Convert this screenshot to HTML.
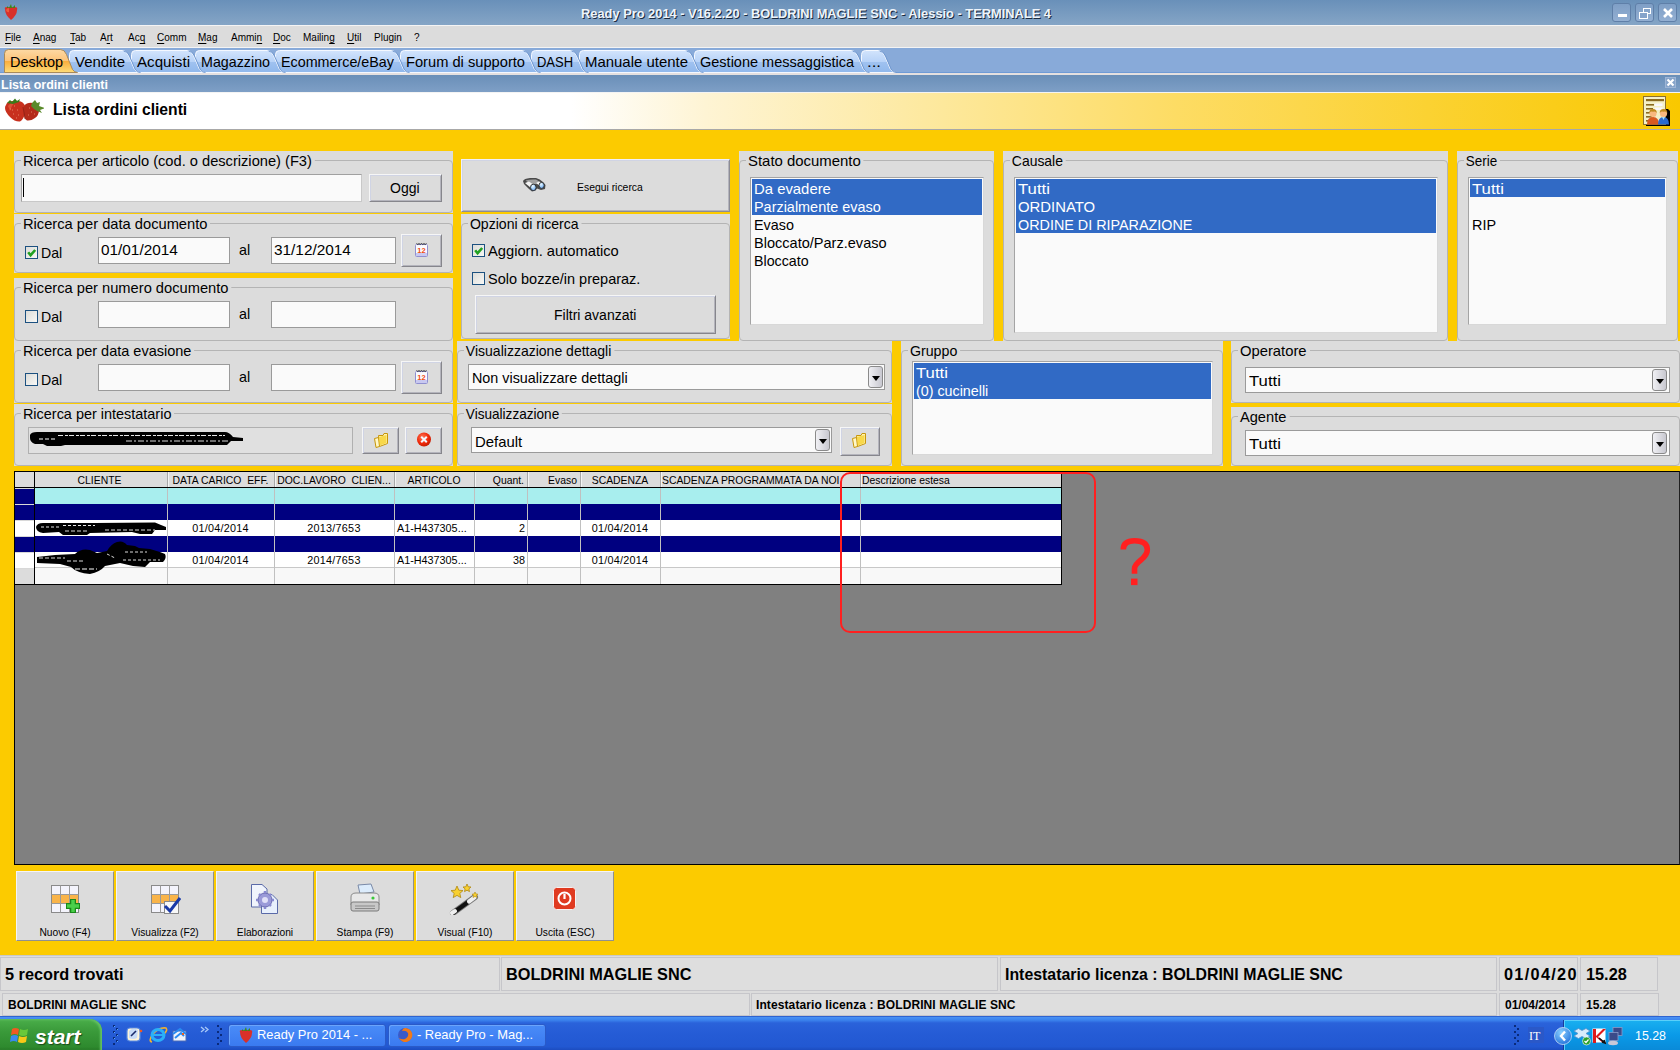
<!DOCTYPE html>
<html><head><meta charset="utf-8">
<style>
*{box-sizing:border-box;margin:0;padding:0}
html,body{width:1680px;height:1050px;overflow:hidden;background:#fccb00;font-family:"Liberation Sans",sans-serif;color:#000}
.a{position:absolute}
.t{position:absolute;white-space:pre;line-height:1}
/* title bar */
#title{left:0;top:0;width:1680px;height:25px;background:linear-gradient(#6990b9,#85a5c6)}
#menu{left:0;top:25px;width:1680px;height:23px;background:#dcdcdc;border-top:1px solid #f4f4f4;border-bottom:1px solid #f4f4f4}
#tabs{left:0;top:48px;width:1680px;height:27px;background:#88aad9;border-bottom:2px solid #e4e0e0;box-shadow:inset 0 -1px 0 #6f9bd6}
#mdi{left:0;top:75px;width:1680px;height:17px;background:linear-gradient(#6a8fb8,#7e9fc6)}
#hdr{left:0;top:92px;width:1680px;height:38px;background:linear-gradient(90deg,#fff 0,#fff 34%,#fef4d4 42%,#fde9a0 55%,#fddc64 70%,#fbd232 85%,#f9c800 100%);border-top:1px solid #f4f4f4;border-bottom:1px solid #a8a8a8}
.wb{position:absolute;top:3px;width:19px;height:19px;border:1px solid #5f7fa8;border-radius:3px;background:linear-gradient(#7f9fc6,#93afd2)}
.menu .t{font-size:11.5px;top:32px;transform:scaleX(.87);transform-origin:0 0;color:#000}
.menu u{text-decoration:underline;text-underline-offset:2px;text-decoration-thickness:1px}
.tab{position:absolute;top:50px;height:23px}
.tab span{position:absolute;top:5px;font-size:14.4px;white-space:pre;line-height:1}
/* panels */
.pn{position:absolute;background:#dcdcdc}
.gb{position:absolute;border:1px solid #b4b4b4;border-radius:4px}
.gl{position:absolute;font-size:15px;line-height:1;white-space:pre;background:#dcdcdc;padding:0 3px 0 2px;transform:scaleX(.955);transform-origin:0 0}
.ed{position:absolute;background:#fafafa;border:1px solid #a0a0a0;border-right-color:#c8c8c8;border-bottom-color:#c8c8c8}
.edw{position:absolute;background:#fafafa;border:1px solid #9a9a9a}
.btn{position:absolute;background:#dcdcdc;border:1px solid #f6f6f6;border-right-color:#86868c;border-bottom-color:#86868c;box-shadow:inset 1px 1px 0 #d0d4e4,inset -1px -1px 0 #b4b4bc}
.lb{position:absolute;background:#fafafa;border:1px solid #a4a4a4;border-right-color:#d8d8d8;border-bottom-color:#d8d8d8}
.sel{position:absolute;background:#316ac5}
.li{position:absolute;font-size:14.5px;line-height:1;white-space:pre}
.cb{position:absolute;width:13px;height:13px;border:1px solid #1c5180;background:linear-gradient(135deg,#dcdcd8,#f8f8f6)}
.txt{position:absolute;font-size:15px;line-height:1;white-space:pre;transform:scaleX(.955);transform-origin:0 0}
.dd{position:absolute;width:15px;height:22px;border:1px solid #8a8a8a;border-radius:3px;background:linear-gradient(90deg,#f0f0f4,#c8c8d0)}
.dd:after{content:"";position:absolute;left:3px;top:9px;border-left:4px solid transparent;border-right:4px solid transparent;border-top:5px solid #000}
/* grid */
#grid{left:14px;top:471px;width:1666px;height:394px;background:#808080;border-top:1px solid #000;border-left:1px solid #000;border-bottom:1px solid #000}
.gh{position:absolute;top:472px;height:16px;background:#dcdcdc;border-right:1px solid #a0a0a0;border-bottom:1px solid #000;font-size:11px;line-height:15px;white-space:pre;overflow:hidden}
.gr{position:absolute;left:34px;width:1027px;height:16px}
.gc{position:absolute;font-size:11px;line-height:1;white-space:pre}
.tb{position:absolute;top:871px;width:98px;height:70px;background:#dcdcdc;border:1px solid #f4f4f8;border-right-color:#909090;border-bottom-color:#909090}
.tb span{position:absolute;left:0;width:96px;top:55px;text-align:center;font-size:11px;line-height:1;white-space:pre;transform:scaleX(.93);transform-origin:50% 0}
.sp{position:absolute;background:#dedede;border:1px solid #c6c6ca}
</style></head><body>
<!-- TITLE BAR -->
<div id="title" class="a"></div>
<svg class="a" style="left:3px;top:3px" width="16" height="18" viewBox="0 0 16 18">
<path d="M2 6 Q1 4 4 4 L12 4 Q15 4 14 7 Q14 12 8 17 Q2 12 2 6Z" fill="#d8302a"/>
<path d="M3 7 Q4 5 6 5 L6 9 Q4 10 3 7Z" fill="#f05a3a"/>
<path d="M4 3 L6 5 L8 1 L9 5 L12 2 L12 5 L4 5Z" fill="#3a8a1a"/>
</svg>
<div class="t" style="left:581px;top:8px;font-size:12.9px;font-weight:700;color:#eef4fb;text-shadow:1px 1px 0 #1a2a40;transform:scaleX(0.9967);transform-origin:0 0">Ready Pro 2014 - V16.2.20 - BOLDRINI MAGLIE SNC - Alessio - TERMINALE 4</div>
<div class="wb" style="left:1612px"><div class="a" style="left:5px;top:10px;width:9px;height:3px;background:#fff"></div></div>
<div class="wb" style="left:1635px"><div class="a" style="left:7px;top:4px;width:8px;height:6px;border:1.5px solid #fff"></div><div class="a" style="left:3px;top:8px;width:9px;height:7px;border:1.5px solid #fff;background:#86a4ca"></div></div>
<div class="wb" style="left:1658px"><svg class="a" style="left:3px;top:3px" width="12" height="12" viewBox="0 0 12 12"><path d="M2 2L10 10M10 2L2 10" stroke="#fff" stroke-width="2.6"/></svg></div>
<div id="menu" class="a"></div>
<div class="menu">
<div class="t" style="left:5px"><u>F</u>ile</div>
<div class="t" style="left:33px"><u>A</u>nag</div>
<div class="t" style="left:70px"><u>T</u>ab</div>
<div class="t" style="left:100px">A<u>r</u>t</div>
<div class="t" style="left:128px">Ac<u>q</u></div>
<div class="t" style="left:157px"><u>C</u>omm</div>
<div class="t" style="left:198px"><u>M</u>ag</div>
<div class="t" style="left:231px">Ammi<u>n</u></div>
<div class="t" style="left:273px"><u>D</u>oc</div>
<div class="t" style="left:303px">Mailin<u>g</u></div>
<div class="t" style="left:347px"><u>U</u>til</div>
<div class="t" style="left:374px">Plugin</div>
<div class="t" style="left:414px">?</div>
</div>
<div id="tabs" class="a"></div>
<svg class="a" style="left:0;top:48px" width="900" height="26" viewBox="0 0 900 26">
<defs>
<linearGradient id="tgo" x1="0" y1="0" x2="0" y2="1"><stop offset="0" stop-color="#fdd9a4"/><stop offset="0.48" stop-color="#fcc47a"/><stop offset="0.52" stop-color="#f9ae3e"/><stop offset="1" stop-color="#fddc78"/></linearGradient>
<linearGradient id="tgb" x1="0" y1="0" x2="0" y2="1"><stop offset="0" stop-color="#d2e4fc"/><stop offset="0.5" stop-color="#b8d3f8"/><stop offset="0.52" stop-color="#a0c2f0"/><stop offset="1" stop-color="#90b8ec"/></linearGradient>
</defs>
<g id="tabshapes"><path d="M861.5 24.5 L861.5 6.5 Q861.5 2.5 865.5 2.5 L878.5 2.5 Q882.5 2.5 884.5 7.5 L890.5 21.5 Q892.5 24.5 895.5 24.5Z" fill="url(#tgb)" stroke="#f4f8ff" stroke-width="1"/><path d="M879.5 3.0 Q883.5 3.0 885.5 8.0 L891.5 22.0 Q893.5 24.5 896.5 24.5" fill="none" stroke="#7098d0" stroke-width="1"/><path d="M694.5 24.5 L694.5 6.5 Q694.5 2.5 698.5 2.5 L851.5 2.5 Q855.5 2.5 857.5 7.5 L863.5 21.5 Q865.5 24.5 868.5 24.5Z" fill="url(#tgb)" stroke="#f4f8ff" stroke-width="1"/><path d="M852.5 3.0 Q856.5 3.0 858.5 8.0 L864.5 22.0 Q866.5 24.5 869.5 24.5" fill="none" stroke="#7098d0" stroke-width="1"/><path d="M579.5 24.5 L579.5 6.5 Q579.5 2.5 583.5 2.5 L685.5 2.5 Q689.5 2.5 691.5 7.5 L697.5 21.5 Q699.5 24.5 702.5 24.5Z" fill="url(#tgb)" stroke="#f4f8ff" stroke-width="1"/><path d="M686.5 3.0 Q690.5 3.0 692.5 8.0 L698.5 22.0 Q700.5 24.5 703.5 24.5" fill="none" stroke="#7098d0" stroke-width="1"/><path d="M531.5 24.5 L531.5 6.5 Q531.5 2.5 535.5 2.5 L570.5 2.5 Q574.5 2.5 576.5 7.5 L582.5 21.5 Q584.5 24.5 587.5 24.5Z" fill="url(#tgb)" stroke="#f4f8ff" stroke-width="1"/><path d="M571.5 3.0 Q575.5 3.0 577.5 8.0 L583.5 22.0 Q585.5 24.5 588.5 24.5" fill="none" stroke="#7098d0" stroke-width="1"/><path d="M400.5 24.5 L400.5 6.5 Q400.5 2.5 404.5 2.5 L522.5 2.5 Q526.5 2.5 528.5 7.5 L534.5 21.5 Q536.5 24.5 539.5 24.5Z" fill="url(#tgb)" stroke="#f4f8ff" stroke-width="1"/><path d="M523.5 3.0 Q527.5 3.0 529.5 8.0 L535.5 22.0 Q537.5 24.5 540.5 24.5" fill="none" stroke="#7098d0" stroke-width="1"/><path d="M275.5 24.5 L275.5 6.5 Q275.5 2.5 279.5 2.5 L391.5 2.5 Q395.5 2.5 397.5 7.5 L403.5 21.5 Q405.5 24.5 408.5 24.5Z" fill="url(#tgb)" stroke="#f4f8ff" stroke-width="1"/><path d="M392.5 3.0 Q396.5 3.0 398.5 8.0 L404.5 22.0 Q406.5 24.5 409.5 24.5" fill="none" stroke="#7098d0" stroke-width="1"/><path d="M195.5 24.5 L195.5 6.5 Q195.5 2.5 199.5 2.5 L267.5 2.5 Q271.5 2.5 273.5 7.5 L279.5 21.5 Q281.5 24.5 284.5 24.5Z" fill="url(#tgb)" stroke="#f4f8ff" stroke-width="1"/><path d="M268.5 3.0 Q272.5 3.0 274.5 8.0 L280.5 22.0 Q282.5 24.5 285.5 24.5" fill="none" stroke="#7098d0" stroke-width="1"/><path d="M131.5 24.5 L131.5 6.5 Q131.5 2.5 135.5 2.5 L187.5 2.5 Q191.5 2.5 193.5 7.5 L199.5 21.5 Q201.5 24.5 204.5 24.5Z" fill="url(#tgb)" stroke="#f4f8ff" stroke-width="1"/><path d="M188.5 3.0 Q192.5 3.0 194.5 8.0 L200.5 22.0 Q202.5 24.5 205.5 24.5" fill="none" stroke="#7098d0" stroke-width="1"/><path d="M69.5 24.5 L69.5 6.5 Q69.5 2.5 73.5 2.5 L122.5 2.5 Q126.5 2.5 128.5 7.5 L134.5 21.5 Q136.5 24.5 139.5 24.5Z" fill="url(#tgb)" stroke="#f4f8ff" stroke-width="1"/><path d="M123.5 3.0 Q127.5 3.0 129.5 8.0 L135.5 22.0 Q137.5 24.5 140.5 24.5" fill="none" stroke="#7098d0" stroke-width="1"/><path d="M4.5 24.5 L4.5 5.5 Q4.5 1.5 8.5 1.5 L60.5 1.5 Q64.5 1.5 66.5 6.5 L72.5 21.5 Q74.5 24.5 77.5 24.5Z" fill="url(#tgo)" stroke="#a88a5a" stroke-width="1"/></g>
</svg>
<div class="tab"><span style="left:10px;transform:scaleX(1.0038);transform-origin:0 0">Desktop</span><span style="left:75px;transform:scaleX(1.0413);transform-origin:0 0">Vendite</span><span style="left:137px;transform:scaleX(1.0518);transform-origin:0 0">Acquisti</span><span style="left:201px;transform:scaleX(0.9915);transform-origin:0 0">Magazzino</span><span style="left:281px;transform:scaleX(0.9949);transform-origin:0 0">Ecommerce/eBay</span><span style="left:406px;transform:scaleX(1.0190);transform-origin:0 0">Forum di supporto</span><span style="left:537px;transform:scaleX(0.9004);transform-origin:0 0">DASH</span><span style="left:585px;transform:scaleX(1.0381);transform-origin:0 0">Manuale utente</span><span style="left:700px;transform:scaleX(1.0080);transform-origin:0 0">Gestione messaggistica</span><span style="left:867px;transform:scaleX(1.1667);transform-origin:0 0">...</span></div>
<div id="mdi" class="a"></div>
<div class="t" style="left:1px;top:79px;font-size:12.5px;font-weight:700;color:#fff">Lista ordini clienti</div>
<div class="a" style="left:1665px;top:77px;width:11px;height:11px;background:#86a4ca;border:1px solid #9fb6d6"><svg class="a" style="left:0;top:0" width="9" height="9" viewBox="0 0 9 9"><path d="M1.5 1.5L7.5 7.5M7.5 1.5L1.5 7.5" stroke="#fff" stroke-width="2.2"/></svg></div>
<div id="hdr" class="a"></div>
<div class="t" style="left:53px;top:102px;font-size:15.7px;font-weight:700">Lista ordini clienti</div>
<!--PANELS--><svg class="a" style="left:4px;top:97px" width="40" height="26" viewBox="0 0 40 26">
<path d="M2 8 Q3 4 9 4 Q17 3 20 7 Q23 11 21 17 Q19 23 16 24.5 Q11 25 6 20 Q1 15 1 11 Q1 9 2 8Z" fill="#c8301e"/>
<path d="M20 9 Q23 5 29 6 Q34 8 35 13 Q35 18 31 21 Q27 24 23 23.5 Q20 22 20 17Z" fill="#b42a1a"/>
<path d="M4 9 Q6 6 10 6 Q7 10 6 14Z" fill="#e86040" opacity=".7"/>
<path d="M3 6 L6 3 L8 5 L11 1.5 L13 4 L16 2 L15 5 L9 7Z" fill="#3a7a1a"/>
<path d="M28 6 L31 3 L33 6 L36 5 L35 9 L41 11 L36 13 L38 16 L33 14 L30 12 L27 9Z" fill="#5a8a2a"/>
<path d="M19 10 L21 22" stroke="#7a1a10" stroke-width="1" opacity=".6"/>
<path d="M6 12h1M10 9h1M13 13h1M9 17h1M14 18h1M25 11h1M27 15h1M24 18h1M30 17h1M8 13h1M12 21h1" stroke="#f0a080" stroke-width="1" opacity=".7"/>
</svg>
<svg class="a" style="left:1642px;top:95px" width="30" height="34" viewBox="0 0 30 34">
<path d="M23 14 L26 14 L28 16 L28 31 L4 31 L4 29 L23 29Z" fill="#000"/>
<rect x="1.5" y="1.5" width="22" height="28" fill="#f4f0c8" stroke="#8a7030"/>
<rect x="4" y="4" width="18" height="2.2" fill="#8a6a20"/>
<rect x="4" y="9" width="8" height="1.6" fill="#8a6a20"/><rect x="12.5" y="8.5" width="8" height="2.5" fill="#f8f8ff"/>
<rect x="4" y="13" width="7" height="1.6" fill="#8a6a20"/><rect x="12.5" y="12.5" width="8" height="2.5" fill="#f8f8ff"/>
<rect x="4" y="17" width="6" height="1.6" fill="#8a6a20"/><rect x="4" y="21" width="6" height="1.6" fill="#8a6a20"/><rect x="4" y="25" width="6" height="1.6" fill="#8a6a20"/>
<path d="M5 29.5 Q5 22 11 22 Q17 22 17 29.5Z" fill="#d85a20"/>
<circle cx="11" cy="18.5" r="3.6" fill="#f8b880"/><path d="M7.2 18 Q7.2 14 11 14 Q14.8 14 14.8 18 Q13 16 11 16.8 Q9 16 7.2 18Z" fill="#c08a20"/>
<path d="M16 29.5 Q16 22 21.5 22 Q27 22 27 29.5Z" fill="#2a6ad0"/><path d="M20 22 L21.5 25 L23 22Z" fill="#a8e0f8"/>
<circle cx="21.5" cy="18.5" r="3.6" fill="#f8b880"/><path d="M17.7 18 Q17.7 14 21.5 14 Q25.3 14 25.3 18 Q23.5 16 21.5 16.8 Q19.5 16 17.7 18Z" fill="#c08a20"/>
</svg>
<div class="pn" style="left:14px;top:151px;width:439px;height:62px"><div class="gb" style="left:0;top:9px;right:0;bottom:0"></div></div><div class="gl" style="left:21px;top:153.3px;transform:scaleX(0.9762);">Ricerca per articolo (cod. o descrizione) (F3)</div>
<div class="ed" style="left:21px;top:174px;width:341px;height:28px;"></div>
<div class="a" style="left:23px;top:178px;width:1px;height:19px;background:#000"></div>
<div class="btn" style="left:369px;top:174px;width:73px;height:28px;"></div>
<div class="txt" style="left:390px;top:180.7px;font-size:14px;transform:none">Oggi</div>
<div class="pn" style="left:14px;top:214px;width:439px;height:59px"><div class="gb" style="left:0;top:9px;right:0;bottom:0"></div></div><div class="gl" style="left:21px;top:216.3px;transform:scaleX(0.9791);">Ricerca per data documento</div>
<div class="cb" style="left:25px;top:246px;width:13px;height:13px;"><svg class="a" style="left:0;top:0" width="11" height="11" viewBox="0 0 11 11"><path d="M2.2 5.2L4.6 8.2L9.2 3" stroke="#21a121" stroke-width="2.6" fill="none"/></svg></div>
<div class="txt" style="left:41px;top:245.0px;font-size:15px;transform:scaleX(0.9416);">Dal</div>
<div class="edw" style="left:98px;top:237px;width:132px;height:27px;"></div>
<div class="txt" style="left:101px;top:242.0px;font-size:15px;transform:scaleX(1.0229);">01/01/2014</div>
<div class="txt" style="left:239px;top:242.0px;font-size:15px;">al</div>
<div class="edw" style="left:271px;top:237px;width:125px;height:27px;"></div>
<div class="txt" style="left:274px;top:242.0px;font-size:15px;transform:scaleX(1.0243);">31/12/2014</div>
<div class="btn" style="left:401px;top:234px;width:41px;height:33px;"><svg class="a" style="left:12px;top:7px" width="16" height="16" viewBox="0 0 16 16"><rect x="1.5" y="2.5" width="12" height="12" rx="1" fill="#fafaff" stroke="#9090d0"/><rect x="2" y="11" width="11" height="3" fill="#c8c8f0"/><path d="M2.5 1.5 Q4 3.5 5 1.5 Q6 3.5 7.5 1.5 Q9 3.5 10 1.5 Q11 3.5 12.5 1.5" stroke="#333" stroke-width="1" fill="none"/><text x="7.5" y="10.5" font-size="7.5" font-weight="700" fill="#f04a10" text-anchor="middle" font-family="Liberation Sans">12</text></svg></div>
<div class="pn" style="left:14px;top:278px;width:439px;height:63px"><div class="gb" style="left:0;top:9px;right:0;bottom:0"></div></div><div class="gl" style="left:21px;top:280.3px;transform:scaleX(0.9781);">Ricerca per numero documento</div>
<div class="cb" style="left:25px;top:310px;width:13px;height:13px;"></div>
<div class="txt" style="left:41px;top:309.0px;font-size:15px;transform:scaleX(0.9416);">Dal</div>
<div class="edw" style="left:98px;top:301px;width:132px;height:27px;"></div>
<div class="txt" style="left:239px;top:306.0px;font-size:15px;">al</div>
<div class="edw" style="left:271px;top:301px;width:125px;height:27px;"></div>
<div class="pn" style="left:14px;top:341px;width:439px;height:62px"><div class="gb" style="left:0;top:9px;right:0;bottom:0"></div></div><div class="gl" style="left:21px;top:343.3px;transform:scaleX(0.9669);">Ricerca per data evasione</div>
<div class="cb" style="left:25px;top:373px;width:13px;height:13px;"></div>
<div class="txt" style="left:41px;top:372.0px;font-size:15px;transform:scaleX(0.9416);">Dal</div>
<div class="edw" style="left:98px;top:364px;width:132px;height:27px;"></div>
<div class="txt" style="left:239px;top:369.0px;font-size:15px;">al</div>
<div class="edw" style="left:271px;top:364px;width:125px;height:27px;"></div>
<div class="btn" style="left:401px;top:361px;width:41px;height:33px;"><svg class="a" style="left:12px;top:7px" width="16" height="16" viewBox="0 0 16 16"><rect x="1.5" y="2.5" width="12" height="12" rx="1" fill="#fafaff" stroke="#9090d0"/><rect x="2" y="11" width="11" height="3" fill="#c8c8f0"/><path d="M2.5 1.5 Q4 3.5 5 1.5 Q6 3.5 7.5 1.5 Q9 3.5 10 1.5 Q11 3.5 12.5 1.5" stroke="#333" stroke-width="1" fill="none"/><text x="7.5" y="10.5" font-size="7.5" font-weight="700" fill="#f04a10" text-anchor="middle" font-family="Liberation Sans">12</text></svg></div>
<div class="pn" style="left:14px;top:404px;width:439px;height:62px"><div class="gb" style="left:0;top:9px;right:0;bottom:0"></div></div><div class="gl" style="left:21px;top:406.3px;transform:scaleX(0.9628);">Ricerca per intestatario</div>
<div class="ed" style="left:28px;top:427px;width:325px;height:27px;background:#e0e0e0;border-color:#b0b0b0"></div>
<svg class="a" style="left:25px;top:425px" width="225" height="25" viewBox="0 0 225 25">
<path d="M5 10 Q6 7 12 7 L200 7 Q204 7 208 12 L218 13 L218 16 L206 16 L202 20 L40 20 L36 21 L22 21 L18 19 L10 19 Q5 17 5 13Z" fill="#000"/>
<path d="M33 10.5H200" stroke="#fff" stroke-width="1" stroke-dasharray="5 2 3 1" opacity=".9"/>
<path d="M101 16H203" stroke="#fff" stroke-width="1" stroke-dasharray="6 2 2 2" opacity=".85"/>
<path d="M14 14H32" stroke="#fff" stroke-width="1" stroke-dasharray="4 2"/>
</svg>
<div class="btn" style="left:362px;top:427px;width:37px;height:27px;"><svg class="a" style="left:10px;top:4px" width="17" height="17" viewBox="0 0 17 17"><path d="M5.5 3.5 L10 3.5 L11 1.5 L14.5 1.5 L14.5 11.5 L6.5 14.5Z" fill="#fff4b0" stroke="#c8960a"/><path d="M1.5 6.5 L5.5 5.5 L6.5 14.5 L3 15.5Z" fill="#fff8c8" stroke="#c8960a"/><path d="M6 5 L13.5 3 L13.5 11 L6.8 13.5Z" fill="#f8d84a"/></svg></div>
<div class="btn" style="left:405px;top:427px;width:37px;height:27px;"><svg class="a" style="left:10px;top:3px" width="16" height="17" viewBox="0 0 16 17"><defs><radialGradient id="rg" cx=".4" cy=".35" r=".7"><stop offset="0" stop-color="#ff7a5a"/><stop offset=".6" stop-color="#f02a0a"/><stop offset="1" stop-color="#c01a00"/></radialGradient></defs><circle cx="8" cy="8.5" r="7" fill="url(#rg)"/><path d="M5.2 5.7L10.8 11.3M10.8 5.7L5.2 11.3" stroke="#f4f8ff" stroke-width="2"/></svg></div>
<div class="btn" style="left:461px;top:159px;width:269px;height:53px;border-color:#f0f0f8 #8c8c94 #8c8c94 #f0f0f8"></div>
<svg class="a" style="left:521px;top:176px" width="26" height="17" viewBox="0 0 26 17">
<defs><radialGradient id="lens" cx=".4" cy=".3" r=".7"><stop offset="0" stop-color="#f0f8ff"/><stop offset=".5" stop-color="#a8d4fc"/><stop offset="1" stop-color="#70a8f0"/></radialGradient></defs>
<path d="M2 5 Q3 2.5 9 2 L15 2 Q19 3 22 6 L24.5 9 L24 13 L20 14 L16 12.5 L14.5 14.5 L11 15.5 L8 13 L3 8 Z" fill="#4a4a4a"/>
<path d="M4.5 4.5 Q9 3 15 3.5 L19 6 L15 8 L9 8Z" fill="#a0a0a0"/>
<path d="M4 7 L8 5.5 L13 9 L10 12Z" fill="#f4f4f4"/>
<path d="M15 7 L18 5.5 L22 7.5 L19 10Z" fill="#f4f4f4"/>
<ellipse cx="12.3" cy="11.4" rx="2.8" ry="3.2" fill="url(#lens)" stroke="#2a2a2a" stroke-width=".9"/>
<ellipse cx="20.6" cy="9.4" rx="2.6" ry="3" fill="url(#lens)" stroke="#2a2a2a" stroke-width=".9"/>
</svg>
<div class="txt" style="left:577px;top:182.6px;font-size:10.4px;transform:none">Esegui ricerca</div>
<div class="pn" style="left:461px;top:214px;width:269px;height:125px"><div class="gb" style="left:0;top:9px;right:0;bottom:0"></div></div><div class="gl" style="left:468px;top:216.3px;transform:scaleX(0.9380);">Opzioni di ricerca</div>
<div class="cb" style="left:472px;top:244px;width:13px;height:13px;"><svg class="a" style="left:0;top:0" width="11" height="11" viewBox="0 0 11 11"><path d="M2.2 5.2L4.6 8.2L9.2 3" stroke="#21a121" stroke-width="2.6" fill="none"/></svg></div>
<div class="txt" style="left:488px;top:242.5px;font-size:15px;transform:scaleX(0.9803);">Aggiorn. automatico</div>
<div class="cb" style="left:472px;top:272px;width:13px;height:13px;"></div>
<div class="txt" style="left:488px;top:271.0px;font-size:15px;transform:scaleX(0.9669);">Solo bozze/in preparaz.</div>
<div class="btn" style="left:475px;top:295px;width:241px;height:39px;"></div>
<div class="txt" style="left:554px;top:307.7px;font-size:14px;transform:none">Filtri avanzati</div>
<div class="pn" style="left:739px;top:151px;width:255px;height:190px"><div class="gb" style="left:0;top:9px;right:0;bottom:0"></div></div><div class="gl" style="left:746px;top:153.3px;transform:scaleX(0.9945);">Stato documento</div>
<div class="lb" style="left:750px;top:177px;width:234px;height:148px;"></div>
<div class="sel" style="left:752px;top:179px;width:230px;height:36px;"></div>
<div class="txt" style="left:754px;top:181.0px;font-size:15px;color:#fff;transform:scaleX(0.9915);">Da evadere</div>
<div class="txt" style="left:754px;top:199.0px;font-size:15px;color:#fff;transform:scaleX(0.9618);">Parzialmente evaso</div>
<div class="txt" style="left:754px;top:217.0px;font-size:15px;color:#000;transform:scaleX(0.9568);">Evaso</div>
<div class="txt" style="left:754px;top:235.0px;font-size:15px;color:#000;transform:scaleX(0.9697);">Bloccato/Parz.evaso</div>
<div class="txt" style="left:754px;top:253.0px;font-size:15px;color:#000;transform:scaleX(0.9488);">Bloccato</div>
<div class="pn" style="left:1003px;top:151px;width:445px;height:190px"><div class="gb" style="left:0;top:9px;right:0;bottom:0"></div></div><div class="gl" style="left:1010px;top:153.3px;transform:scaleX(0.9283);">Causale</div>
<div class="lb" style="left:1014px;top:177px;width:424px;height:156px;"></div>
<div class="sel" style="left:1016px;top:179px;width:420px;height:54px;"></div>
<div class="txt" style="left:1018px;top:181.0px;font-size:15px;color:#fff;transform:scaleX(1.1144);">Tutti</div>
<div class="txt" style="left:1018px;top:199.0px;font-size:15px;color:#fff;transform:scaleX(0.9910);">ORDINATO</div>
<div class="txt" style="left:1018px;top:217.0px;font-size:15px;color:#fff;transform:scaleX(0.9569);">ORDINE DI RIPARAZIONE</div>
<div class="pn" style="left:1457px;top:151px;width:221px;height:190px"><div class="gb" style="left:0;top:9px;right:0;bottom:0"></div></div><div class="gl" style="left:1464px;top:153.3px;transform:scaleX(0.8963);">Serie</div>
<div class="lb" style="left:1468px;top:177px;width:199px;height:148px;"></div>
<div class="sel" style="left:1470px;top:179px;width:195px;height:18px;"></div>
<div class="txt" style="left:1472px;top:181.0px;font-size:15px;color:#fff;transform:scaleX(1.1144);">Tutti</div>
<div class="txt" style="left:1472px;top:217.0px;font-size:15px;transform:scaleX(0.9594);">RIP</div>
<div class="pn" style="left:457px;top:341px;width:435px;height:62px"><div class="gb" style="left:0;top:9px;right:0;bottom:0"></div></div><div class="gl" style="left:464px;top:343.3px;transform:scaleX(0.9341);">Visualizzazione dettagli</div>
<div class="edw" style="left:468px;top:364px;width:417px;height:26px;"></div>
<div class="txt" style="left:472px;top:370.0px;font-size:15px;transform:scaleX(0.9570);">Non visualizzare dettagli</div>
<div class="dd" style="left:868px;top:366px;width:15px;height:22px;"></div>
<div class="pn" style="left:457px;top:404px;width:435px;height:62px"><div class="gb" style="left:0;top:9px;right:0;bottom:0"></div></div><div class="gl" style="left:464px;top:406.3px;transform:scaleX(0.9057);">Visualizzazione</div>
<div class="edw" style="left:471px;top:427px;width:361px;height:26px;"></div>
<div class="txt" style="left:475px;top:433.5px;font-size:15px;transform:scaleX(0.9930);">Default</div>
<div class="dd" style="left:815px;top:429px;width:15px;height:22px;"></div>
<div class="btn" style="left:840px;top:427px;width:40px;height:29px;"><svg class="a" style="left:10px;top:4px" width="17" height="17" viewBox="0 0 17 17"><path d="M5.5 3.5 L10 3.5 L11 1.5 L14.5 1.5 L14.5 11.5 L6.5 14.5Z" fill="#fff4b0" stroke="#c8960a"/><path d="M1.5 6.5 L5.5 5.5 L6.5 14.5 L3 15.5Z" fill="#fff8c8" stroke="#c8960a"/><path d="M6 5 L13.5 3 L13.5 11 L6.8 13.5Z" fill="#f8d84a"/></svg></div>
<div class="pn" style="left:901px;top:341px;width:322px;height:125px"><div class="gb" style="left:0;top:9px;right:0;bottom:0"></div></div><div class="gl" style="left:908px;top:343.3px;transform:scaleX(0.9471);">Gruppo</div>
<div class="lb" style="left:912px;top:361px;width:301px;height:94px;"></div>
<div class="sel" style="left:914px;top:363px;width:297px;height:36px;"></div>
<div class="txt" style="left:916px;top:365.0px;font-size:15px;color:#fff;transform:scaleX(1.1144);">Tutti</div>
<div class="txt" style="left:916px;top:383.0px;font-size:15px;color:#fff;transform:scaleX(0.9531);">(0) cucinelli</div>
<div class="pn" style="left:1231px;top:341px;width:449px;height:62px"><div class="gb" style="left:0;top:9px;right:0;bottom:0"></div></div><div class="gl" style="left:1238px;top:343.3px;transform:scaleX(0.9860);">Operatore</div>
<div class="edw" style="left:1245px;top:367px;width:425px;height:26px;"></div>
<div class="txt" style="left:1249px;top:372.5px;font-size:15px;transform:scaleX(1.1144);">Tutti</div>
<div class="dd" style="left:1652px;top:369px;width:15px;height:22px;"></div>
<div class="pn" style="left:1231px;top:407px;width:449px;height:59px"><div class="gb" style="left:0;top:9px;right:0;bottom:0"></div></div><div class="gl" style="left:1238px;top:409.3px;transform:scaleX(0.9759);">Agente</div>
<div class="edw" style="left:1245px;top:430px;width:425px;height:26px;"></div>
<div class="txt" style="left:1249px;top:435.5px;font-size:15px;transform:scaleX(1.1144);">Tutti</div>
<div class="dd" style="left:1652px;top:432px;width:15px;height:22px;"></div><!--/PANELS-->
<!--BOTTOM--><div class="a" style="left:14px;top:471px;width:1666px;height:394px;background:#808080;border:1px solid #000;border-right-color:#202020"></div>
<div class="a" style="left:15px;top:472px;width:1047px;height:113px;background:#fff;border-right:1px solid #000;border-bottom:1px solid #000"></div>
<div class="a" style="left:15px;top:472px;width:1046px;height:15px;background:#dcdcdc"></div>
<div class="a" style="left:15px;top:487px;width:1046px;height:1px;background:#000"></div>
<div class="a" style="left:35px;top:488px;width:1026px;height:16px;background:#a8eeee"></div>
<div class="a" style="left:35px;top:504px;width:1026px;height:16px;background:#000080"></div>
<div class="a" style="left:35px;top:520px;width:1026px;height:16px;background:#ffffff"></div>
<div class="a" style="left:35px;top:536px;width:1026px;height:16px;background:#000080"></div>
<div class="a" style="left:35px;top:552px;width:1026px;height:16px;background:#ffffff"></div>
<div class="a" style="left:35px;top:568px;width:1026px;height:16px;background:#f8f8f8"></div>
<div class="a" style="left:35px;top:567px;width:1026px;height:1px;background:#c8c8c8"></div>
<div class="a" style="left:15px;top:488px;width:19px;height:16px;background:#000080;border-top:1px solid #d8d8d8"></div>
<div class="a" style="left:15px;top:504px;width:19px;height:16px;background:#000080;border-top:1px solid #d8d8d8"></div>
<div class="a" style="left:15px;top:520px;width:19px;height:16px;background:#ffffff;border-top:1px solid #d8d8d8"></div>
<div class="a" style="left:15px;top:536px;width:19px;height:16px;background:#000080;border-top:1px solid #d8d8d8"></div>
<div class="a" style="left:15px;top:552px;width:19px;height:16px;background:#ffffff;border-top:1px solid #d8d8d8"></div>
<div class="a" style="left:15px;top:568px;width:19px;height:16px;background:#dcdcdc;border-top:1px solid #d8d8d8"></div>
<div class="a" style="left:34px;top:472px;width:1px;height:112px;background:#000"></div>
<div class="a" style="left:167px;top:472px;width:1px;height:15px;background:#a8a8a8"></div>
<div class="a" style="left:168px;top:472px;width:1px;height:15px;background:#f4f4f4"></div>
<div class="a" style="left:167px;top:488px;width:1px;height:96px;background:#c0c0c0"></div>
<div class="a" style="left:274px;top:472px;width:1px;height:15px;background:#a8a8a8"></div>
<div class="a" style="left:275px;top:472px;width:1px;height:15px;background:#f4f4f4"></div>
<div class="a" style="left:274px;top:488px;width:1px;height:96px;background:#c0c0c0"></div>
<div class="a" style="left:394px;top:472px;width:1px;height:15px;background:#a8a8a8"></div>
<div class="a" style="left:395px;top:472px;width:1px;height:15px;background:#f4f4f4"></div>
<div class="a" style="left:394px;top:488px;width:1px;height:96px;background:#c0c0c0"></div>
<div class="a" style="left:474px;top:472px;width:1px;height:15px;background:#a8a8a8"></div>
<div class="a" style="left:475px;top:472px;width:1px;height:15px;background:#f4f4f4"></div>
<div class="a" style="left:474px;top:488px;width:1px;height:96px;background:#c0c0c0"></div>
<div class="a" style="left:527px;top:472px;width:1px;height:15px;background:#a8a8a8"></div>
<div class="a" style="left:528px;top:472px;width:1px;height:15px;background:#f4f4f4"></div>
<div class="a" style="left:527px;top:488px;width:1px;height:96px;background:#c0c0c0"></div>
<div class="a" style="left:580px;top:472px;width:1px;height:15px;background:#a8a8a8"></div>
<div class="a" style="left:581px;top:472px;width:1px;height:15px;background:#f4f4f4"></div>
<div class="a" style="left:580px;top:488px;width:1px;height:96px;background:#c0c0c0"></div>
<div class="a" style="left:660px;top:472px;width:1px;height:15px;background:#a8a8a8"></div>
<div class="a" style="left:661px;top:472px;width:1px;height:15px;background:#f4f4f4"></div>
<div class="a" style="left:660px;top:488px;width:1px;height:96px;background:#c0c0c0"></div>
<div class="a" style="left:860px;top:472px;width:1px;height:15px;background:#a8a8a8"></div>
<div class="a" style="left:861px;top:472px;width:1px;height:15px;background:#f4f4f4"></div>
<div class="a" style="left:860px;top:488px;width:1px;height:96px;background:#c0c0c0"></div>
<div class="t" style="left:32px;width:135px;top:475.5px;font-size:10.4px;text-align:center">CLIENTE</div>
<div class="t" style="left:167px;width:107px;top:475.5px;font-size:10.4px;text-align:center">DATA CARICO  EFF.</div>
<div class="t" style="left:274px;width:120px;top:475.5px;font-size:10.4px;text-align:center">DOC.LAVORO  CLIEN...</div>
<div class="t" style="left:394px;width:80px;top:475.5px;font-size:10.4px;text-align:center">ARTICOLO</div>
<div class="t" style="left:474px;width:50px;top:475.5px;font-size:10.4px;text-align:right">Quant.</div>
<div class="t" style="left:527px;width:50px;top:475.5px;font-size:10.4px;text-align:right">Evaso</div>
<div class="t" style="left:580px;width:80px;top:475.5px;font-size:10.4px;text-align:center">SCADENZA</div>
<div class="t" style="left:662px;top:475.5px;font-size:10.4px">SCADENZA PROGRAMMATA DA NOI</div>
<div class="t" style="left:862px;top:475.5px;font-size:10.4px">Descrizione estesa</div>
<div class="t" style="left:167px;width:107px;top:523.2px;font-size:10.8px;text-align:center;letter-spacing:.25px">01/04/2014</div>
<div class="t" style="left:274px;width:120px;top:523.2px;font-size:10.8px;text-align:center;letter-spacing:.25px">2013/7653</div>
<div class="t" style="left:397px;top:523.2px;font-size:10.8px">A1-H437305...</div>
<div class="t" style="left:474px;width:51px;top:523.2px;font-size:10.8px;text-align:right">2</div>
<div class="t" style="left:580px;width:80px;top:523.2px;font-size:10.8px;text-align:center;letter-spacing:.25px">01/04/2014</div>
<div class="t" style="left:167px;width:107px;top:555.2px;font-size:10.8px;text-align:center;letter-spacing:.25px">01/04/2014</div>
<div class="t" style="left:274px;width:120px;top:555.2px;font-size:10.8px;text-align:center;letter-spacing:.25px">2014/7653</div>
<div class="t" style="left:397px;top:555.2px;font-size:10.8px">A1-H437305...</div>
<div class="t" style="left:474px;width:51px;top:555.2px;font-size:10.8px;text-align:right">38</div>
<div class="t" style="left:580px;width:80px;top:555.2px;font-size:10.8px;text-align:center;letter-spacing:.25px">01/04/2014</div>
<svg class="a" style="left:35px;top:520px" width="132" height="56" viewBox="0 0 132 56">
<path d="M1 7 Q2 3 8 3 L60 3 L120 2.5 L126 5 L131 7 L131 10 L120 10 L117 14 L105 14 L97 12 L55 13 L52 15 L28 15 L24 12 L8 13 Q1 12 1 7 Z" fill="#000"/>
<path d="M6 7H24M28 5.5H60" stroke="#fff" stroke-width="1" stroke-dasharray="3 2" opacity=".9"/>
<path d="M30 11H52M70 10H120" stroke="#fff" stroke-width="1" stroke-dasharray="4 2" opacity=".85"/>
<path d="M2 37 L20 35 L40 34 Q46 28 55 30 L62 33 L72 31 Q76 24 82 22 Q88 20 92 25 L100 26 L104 28 L115 29 L125 32 L130 34 Q132 38 128 42 L115 42 L110 47 L98 46 L85 43 L70 46 Q65 52 55 54 Q42 53 36 47 L25 44 L2 43 Z" fill="#000"/>
<path d="M4 38H30M32 41H48" stroke="#fff" stroke-width="1" stroke-dasharray="4 2" opacity=".85"/>
<path d="M72 34 L80 38 M90 32H112M88 40H125" stroke="#fff" stroke-width="1" stroke-dasharray="3 2" opacity=".85"/>
<path d="M40 49H62" stroke="#fff" stroke-width="1" stroke-dasharray="5 2"/>
</svg>
<div class="a" style="left:840px;top:472px;width:256px;height:161px;border:2px solid #ff2020;border-radius:10px"></div>
<svg class="a" style="left:1116px;top:536px" width="38" height="52" viewBox="0 0 38 52">
<path d="M7.3 13.5 Q7.3 4.7 18.5 4.7 Q31.3 4.7 31.3 13.8 Q31.3 18.5 25.5 23.5 Q18.5 29 18.5 32.5 L18.5 37.7" stroke="#ff2020" stroke-width="5.6" fill="none" stroke-linecap="butt"/>
<rect x="15" y="42.6" width="6.5" height="6.5" fill="#ff2020"/>
</svg>
<div class="tb" style="left:16px"><span>Nuovo (F4)</span></div>
<div class="tb" style="left:116px"><span>Visualizza (F2)</span></div>
<div class="tb" style="left:216px"><span>Elaborazioni</span></div>
<div class="tb" style="left:316px"><span>Stampa (F9)</span></div>
<div class="tb" style="left:416px"><span>Visual (F10)</span></div>
<div class="tb" style="left:516px"><span>Uscita (ESC)</span></div>
<svg class="a" style="left:50px;top:884px" width="31" height="31" viewBox="0 0 31 31"><rect x="1.5" y="1.5" width="27" height="27" fill="#f4f4fc" stroke="#8a8a8a"/><rect x="2" y="10.5" width="26" height="9" fill="#f9b44a"/><path d="M10.5 1.5V28.5M19.5 1.5V28.5M1.5 10.5H28.5M1.5 19.5H28.5" stroke="#9a9a9a"/><path d="M23 15V29M16 22H30" stroke="#1a8a1a" stroke-width="6"/><path d="M23 16V28M17 22H29" stroke="#4ad04a" stroke-width="3.5"/></svg>
<svg class="a" style="left:150px;top:884px" width="31" height="31" viewBox="0 0 31 31"><rect x="1.5" y="1.5" width="27" height="27" fill="#f4f4fc" stroke="#8a8a8a"/><rect x="2" y="10.5" width="26" height="9" fill="#f9b44a"/><path d="M10.5 1.5V28.5M19.5 1.5V28.5M1.5 10.5H28.5M1.5 19.5H28.5" stroke="#9a9a9a"/><rect x="14.5" y="17.5" width="14" height="12" fill="#f8f8f8" stroke="#8a8a8a"/><path d="M15 22 L20 27 L30 14" stroke="#1a3aa8" stroke-width="3" fill="none"/></svg>
<svg class="a" style="left:249px;top:883px" width="32" height="32" viewBox="0 0 32 32"><path d="M2.5 1.5H13L18 6V24H2.5Z" fill="#f0f4fc" stroke="#5a6aa8"/><path d="M12.5 11.5H23L28.5 17V30.5H12.5Z" fill="#e8f0fc" stroke="#5a6aa8"/><circle cx="16" cy="17" r="7" fill="#9a9ad8" stroke="#6a6ab0"/><circle cx="16" cy="17" r="3" fill="#e0e0f8"/><path d="M16 8V10M16 24V26M7 17H9M23 17H25M10 11L11.5 12.5M20.5 21.5L22 23M22 11L20.5 12.5M11.5 21.5L10 23" stroke="#8a8ad0" stroke-width="2.5"/></svg>
<svg class="a" style="left:349px;top:883px" width="32" height="32" viewBox="0 0 32 32"><path d="M9 2 L22 1 L25 9 L11 11Z" fill="#dcecfc" stroke="#7a8aa8"/><path d="M2 14 Q2 10 7 10 L25 10 Q30 10 30 14 L30 22 L2 22Z" fill="#e8e8e8" stroke="#8a8a8a"/><rect x="2" y="19" width="28" height="9" rx="2" fill="#c8c8c8" stroke="#7a7a7a"/><path d="M6 23H26M6 25.5H26" stroke="#8a8a8a"/><circle cx="24" cy="15" r="1.6" fill="#3ac83a"/></svg>
<svg class="a" style="left:449px;top:883px" width="32" height="32" viewBox="0 0 32 32"><path d="M4 30 L26 14" stroke="#7a7a7a" stroke-width="6" stroke-linecap="round"/><path d="M4 30 L26 14" stroke="#111" stroke-width="4.2" stroke-linecap="round"/><path d="M20 18.5 L26 14" stroke="#f0f0f0" stroke-width="4.2" stroke-linecap="round"/><path d="M3 30 L6 28" stroke="#eee" stroke-width="4" stroke-linecap="round"/><path d="M8 3L9.8 7.2L14 7.6L10.8 10.4L11.8 14.6L8 12.4L4.2 14.6L5.2 10.4L2 7.6L6.2 7.2Z" fill="#f8d030" stroke="#b08810" stroke-width=".8"/><path d="M18 1L19.2 3.8L22 4L19.9 5.9L20.5 8.6L18 7.2L15.5 8.6L16.1 5.9L14 4L16.8 3.8Z" fill="#f8d030" stroke="#b08810" stroke-width=".8"/><path d="M26 9L27 11L29 11.2L27.5 12.5L28 14.5L26 13.4L24 14.5L24.5 12.5L23 11.2L25 11Z" fill="#f8d030" stroke="#b08810" stroke-width=".6"/></svg>
<svg class="a" style="left:553px;top:887px" width="24" height="24" viewBox="0 0 24 24"><rect x="0.5" y="0.5" width="22" height="22" rx="3" fill="#e03a20" stroke="#f8f0f0"/><circle cx="11.5" cy="11.5" r="6" fill="none" stroke="#fff" stroke-width="2"/><path d="M11.5 7V12" stroke="#fff" stroke-width="2.2"/></svg>
<div class="a" style="left:0;top:955px;width:1680px;height:61px;background:#dcdcdc;border-top:1px solid #c8c8c8"></div>
<div class="sp" style="left:0px;top:957px;width:500px;height:34px"></div>
<div class="sp" style="left:501px;top:957px;width:497px;height:34px"></div>
<div class="sp" style="left:1000px;top:957px;width:497px;height:34px"></div>
<div class="sp" style="left:1499px;top:957px;width:79px;height:34px"></div>
<div class="sp" style="left:1580px;top:957px;width:78px;height:34px"></div>
<div class="sp" style="left:2px;top:993px;width:748px;height:23px"></div>
<div class="sp" style="left:751px;top:993px;width:746px;height:23px"></div>
<div class="sp" style="left:1499px;top:993px;width:79px;height:23px"></div>
<div class="sp" style="left:1580px;top:993px;width:79px;height:23px"></div>
<div class="t" style="left:5px;top:966.3px;font-size:16.3px;font-weight:700">5 record trovati</div>
<div class="t" style="left:506px;top:966.3px;font-size:16.3px;font-weight:700">BOLDRINI MAGLIE SNC</div>
<div class="t" style="left:1005px;top:966.3px;font-size:16.3px;font-weight:700;transform:scaleX(.975);transform-origin:0 0">Intestatario licenza : BOLDRINI MAGLIE SNC</div>
<div class="a" style="left:1499px;top:957px;width:79px;height:34px;overflow:hidden"><div class="t" style="left:5px;top:9.3px;font-size:16.3px;font-weight:700;letter-spacing:1.3px">01/04/2014</div></div>
<div class="t" style="left:1586px;top:966.3px;font-size:16.3px;font-weight:700">15.28</div>
<div class="t" style="left:8px;top:998.5px;font-size:12px;font-weight:700;letter-spacing:.1px">BOLDRINI MAGLIE SNC</div>
<div class="t" style="left:756px;top:998.5px;font-size:12px;font-weight:700;letter-spacing:.1px">Intestatario licenza : BOLDRINI MAGLIE SNC</div>
<div class="t" style="left:1505px;top:998.5px;font-size:12px;font-weight:700">01/04/2014</div>
<div class="t" style="left:1586px;top:998.5px;font-size:12px;font-weight:700">15.28</div>
<div class="a" style="left:0;top:1016px;width:1680px;height:34px;background:linear-gradient(#2f64d0 0,#2f64d0 1px,#4a92f4 1px,#3c84ee 4px,#2a62da 7px,#255cd6 50%,#2258d2 90%,#1c4cc0 100%)"></div>
<div class="a" style="left:0;top:1019px;width:102px;height:31px;border-radius:0 12px 0 0;background:linear-gradient(#4aae4a 0,#3a9a3a 40%,#2e8a2e 90%,#267a26 100%);box-shadow:inset -2px 1px 2px #62c062"></div>
<svg class="a" style="left:10px;top:1026px" width="20" height="19" viewBox="0 0 20 19"><path d="M2 3 Q5 1 9 3 L8 9 Q5 7 1 9Z" fill="#f05a22"/><path d="M10 3 Q14 5 18 3 L17 9 Q13 11 9 9Z" fill="#6ac83a"/><path d="M1 10 Q5 8 8 10 L7 16 Q4 14 0 16Z" fill="#3a8af0"/><path d="M9 10 Q13 12 17 10 L16 16 Q12 18 8 16Z" fill="#f8c818"/></svg>
<div class="t" style="left:35px;top:1026px;font-size:21px;font-weight:700;font-style:italic;color:#fff;text-shadow:1px 1px 1px #1a4a1a">start</div>
<svg class="a" style="left:112px;top:1025px" width="8" height="22" viewBox="0 0 8 22"><g fill="#0a2a7a"><rect x="1" y="0" width="2" height="2"/><rect x="4" y="3" width="2" height="2"/><rect x="1" y="6" width="2" height="2"/><rect x="4" y="9" width="2" height="2"/><rect x="1" y="12" width="2" height="2"/><rect x="4" y="15" width="2" height="2"/><rect x="1" y="18" width="2" height="2"/></g><g fill="#5aa8f8"><rect x="2" y="1" width="1" height="1"/><rect x="5" y="4" width="1" height="1"/><rect x="2" y="7" width="1" height="1"/><rect x="5" y="10" width="1" height="1"/><rect x="2" y="13" width="1" height="1"/><rect x="5" y="16" width="1" height="1"/></g></svg>
<svg class="a" style="left:216px;top:1025px" width="8" height="22" viewBox="0 0 8 22"><g fill="#0a2a7a"><rect x="1" y="0" width="2" height="2"/><rect x="4" y="3" width="2" height="2"/><rect x="1" y="6" width="2" height="2"/><rect x="4" y="9" width="2" height="2"/><rect x="1" y="12" width="2" height="2"/><rect x="4" y="15" width="2" height="2"/><rect x="1" y="18" width="2" height="2"/></g></svg>
<svg class="a" style="left:124px;top:1025px" width="90" height="20" viewBox="0 0 90 20">
<rect x="3" y="3" width="13" height="13" rx="3" fill="#fff4d8" stroke="#5a8ae0" stroke-width="1.2"/><path d="M5 6 Q9 2 14 5 L13 13 Q9 15 5 13Z" fill="#c8dcf8"/><path d="M7 11 L12 6" stroke="#1a2a6a" stroke-width="1.6"/><circle cx="17" cy="6" r="1.3" fill="#f05a20"/>
<path d="M28 17 Q24 16 29 9 Q35 2 42 3 Q44 5 40 9" stroke="#f0b030" stroke-width="1.6" fill="none"/><ellipse cx="34" cy="10" rx="6" ry="5.5" fill="none" stroke="#2ab0f8" stroke-width="3"/><path d="M29 10 H39" stroke="#2ab0f8" stroke-width="2"/>
<rect x="49" y="6" width="13" height="10" fill="#f0f4fc" stroke="#4a6ab8"/><path d="M49 9 L56 4 L62 9" stroke="#2a8af0" stroke-width="2" fill="none"/><path d="M51 13 L57 8 L60 11" stroke="#2a8af0" stroke-width="2" fill="none"/><rect x="58" y="8" width="2" height="2" fill="#f06020"/>
<path d="M77 2 L80 4.5 L77 7 M81 2 L84 4.5 L81 7" stroke="#a8c8f8" stroke-width="1.3" fill="none"/>
</svg>
<div class="a" style="left:228px;top:1024px;width:158px;height:23px;border-radius:3px;background:linear-gradient(#4a8cf8,#3a7af0);border:1px solid #2a5ac8;box-shadow:inset 1px 1px 0 #6aa4fc"></div>
<div class="t" style="left:257px;top:1028.5px;font-size:12.9px;color:#fff">Ready Pro 2014 - ...</div>
<div class="a" style="left:388px;top:1024px;width:158px;height:23px;border-radius:3px;background:linear-gradient(#4a8cf8,#3a7af0);border:1px solid #2a5ac8;box-shadow:inset 1px 1px 0 #6aa4fc"></div>
<div class="t" style="left:417px;top:1028.5px;font-size:12.9px;color:#fff">- Ready Pro - Mag...</div>
<svg class="a" style="left:238px;top:1026px" width="16" height="18" viewBox="0 0 16 18"><path d="M2 6 Q1 4 4 4 L12 4 Q15 4 14 7 Q14 12 8 17 Q2 12 2 6Z" fill="#d8302a"/><path d="M4 3 L6 5 L8 1 L9 5 L12 2 L12 5 L4 5Z" fill="#3a8a1a"/></svg>
<svg class="a" style="left:397px;top:1027px" width="16" height="16" viewBox="0 0 16 16"><circle cx="8" cy="8" r="7" fill="#3a5ac8"/><path d="M8 1 A7 7 0 1 1 2 11 Q5 13 8 12 Q12 10 11 6 Q9 3 5 4 Q6 1 8 1Z" fill="#f07a1a"/></svg>
<div class="a" style="left:1563px;top:1020px;width:117px;height:30px;background:linear-gradient(#1ab0f0,#0a9ae8 50%,#0a8ad8);border-left:1px solid #1a3a9a;box-shadow:inset 1px 1px 0 #5ad0fa"></div>
<svg class="a" style="left:1513px;top:1025px" width="8" height="22" viewBox="0 0 8 22"><g fill="#0a2a7a"><rect x="1" y="0" width="2" height="2"/><rect x="4" y="3" width="2" height="2"/><rect x="1" y="6" width="2" height="2"/><rect x="4" y="9" width="2" height="2"/><rect x="1" y="12" width="2" height="2"/><rect x="4" y="15" width="2" height="2"/><rect x="1" y="18" width="2" height="2"/></g></svg>
<div class="a" style="left:1528px;top:1027px;width:16px;height:16px;background:#2a58c8"></div>
<div class="t" style="left:1529px;top:1030px;font-size:12px;color:#fff;font-family:'Liberation Serif'">IT</div>
<svg class="a" style="left:1554px;top:1025px" width="76" height="22" viewBox="0 0 76 22">
<defs><radialGradient id="arr" cx=".4" cy=".3" r=".8"><stop offset="0" stop-color="#8ad0ff"/><stop offset="1" stop-color="#1a6ad8"/></radialGradient></defs>
<circle cx="9" cy="11" r="8.5" fill="url(#arr)" stroke="#c8e0f8" stroke-width=".8"/><path d="M11 6.5 L7 11 L11 15.5" stroke="#fff" stroke-width="2.4" fill="none"/>
<path d="M20 6 L24.5 3.5 L28 5.5 L32 3.5 L36 6 L32 8.5 L36 11 L32 13.5 L28 11.5 L24.5 13.5 L20 11 L24 8.5Z" fill="#d8ecfc" stroke="#5a90c8" stroke-width=".8"/><circle cx="32.5" cy="16" r="4" fill="#2aa02a" stroke="#fff" stroke-width=".6"/><path d="M30.5 16 L32 17.5 L34.5 14.5" stroke="#fff" stroke-width="1.2" fill="none"/>
<rect x="38.5" y="3.5" width="13" height="14" fill="#fff"/><path d="M39 4 L42 4 L42 11 L49 4 L52 4 L44 12 L52 18 L49 18 L42 12 L42 18 L39 18Z" fill="#e01a1a"/><path d="M45 13 L51 18 M48 17 L51 18 L50 15" stroke="#111" stroke-width="1.6" fill="none"/>
<rect x="59" y="2.5" width="9" height="8" fill="#3a4a8a" stroke="#8a9ac8" stroke-width=".8"/><rect x="55" y="7.5" width="9" height="8" fill="#3a4a8a" stroke="#8a9ac8" stroke-width=".8"/><ellipse cx="59" cy="18" rx="5" ry="2.2" fill="#c8c8d8"/>
</svg>
<div class="t" style="left:1635px;top:1029.6px;font-size:12.4px;color:#fff">15.28</div><!--/BOTTOM-->
</body></html>
